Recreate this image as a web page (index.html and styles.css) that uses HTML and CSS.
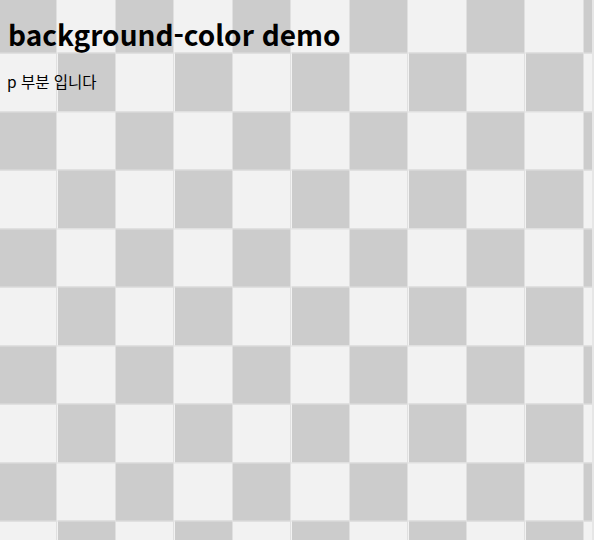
FILE: index.html
```html
<!DOCTYPE html>
<html lang="ko">
<head>
    <meta charset="UTF-8">
    <title>background-color demo</title>
    <link rel="stylesheet" href="styles.css">
</head>
<body>
    <h1>background-color demo</h1>
    <p>p 부분 입니다</p>
</body>
</html>
```

FILE: styles.css
```css
html {
    min-height: 100%;
    background-color: #f2f2f2;
    background-image:
        repeating-linear-gradient(90deg, transparent 0 57.5px, #e0e0e0 57.5px 58.5px),
        repeating-linear-gradient(0deg, transparent 0 57.5px, #e0e0e0 57.5px 58.5px),
        repeating-conic-gradient(#f2f2f2 0 25%, #cccccc 0 50%);
    background-size: 117px 117px, 117px 117px, 117px 117px;
    background-position: -1px -5.5px;
    box-shadow: inset -2px 0 #e6e6e6;
}
body {
    margin: 0;
    padding: 0 7px 0 8px;
    font-family: "Noto Sans CJK KR", "Noto Sans", sans-serif;
    color: #000;
}
h1 {
    margin: 0;
    padding-top: 14px;
    font-size: 28px;
    font-weight: bold;
    line-height: 40px;
}
p {
    margin: 16px 0 0 -1px;
    font-size: 15.5px;
}
```
